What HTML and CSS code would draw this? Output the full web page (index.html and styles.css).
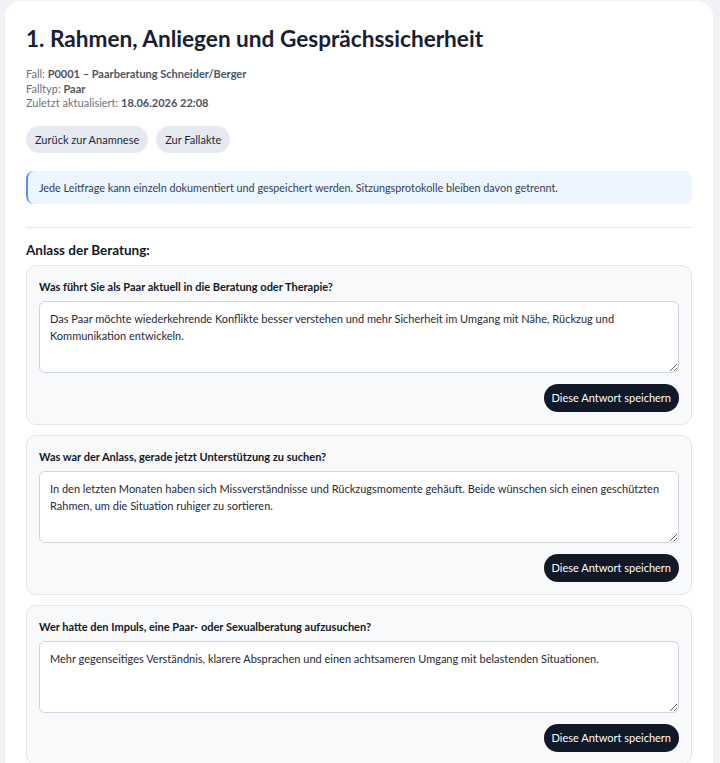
FILE: index.html
```html
<!DOCTYPE html>
<html lang="de">
<head>
  <meta charset="UTF-8">
  <meta name="viewport" content="width=device-width, initial-scale=1">
  <title>Rahmen, Anliegen und Gesprächssicherheit</title>
  <link rel="stylesheet" href="styles.css">
</head>
<body>

<div class="page">
  <h1 class="title">1. Rahmen, Anliegen und Gesprächssicherheit</h1>

  <div class="meta">
    <div>Fall: <strong>P0001 – Paarberatung Schneider/Berger</strong></div>
    <div>Falltyp: <strong>Paar</strong></div>
    <div>Zuletzt aktualisiert: <strong>18.06.2026 22:08</strong></div>
  </div>

  <div class="nav-buttons">
    <button class="pill">Zurück zur Anamnese</button>
    <button class="pill">Zur Fallakte</button>
  </div>

  <div class="info-box">
    Jede Leitfrage kann einzeln dokumentiert und gespeichert werden. Sitzungsprotokolle bleiben davon getrennt.
  </div>

  <hr class="divider">

  <h2 class="section-title">Anlass der Beratung:</h2>

  <div class="question">
    <label class="question-label">Was führt Sie als Paar aktuell in die Beratung oder Therapie?</label>
    <textarea class="answer">Das Paar möchte wiederkehrende Konflikte besser verstehen und mehr Sicherheit im Umgang mit Nähe, Rückzug und Kommunikation entwickeln.</textarea>
    <div class="question-actions">
      <button class="save-btn">Diese Antwort speichern</button>
    </div>
  </div>

  <div class="question">
    <label class="question-label">Was war der Anlass, gerade jetzt Unterstützung zu suchen?</label>
    <textarea class="answer">In den letzten Monaten haben sich Missverständnisse und Rückzugsmomente gehäuft. Beide wünschen sich einen geschützten Rahmen, um die Situation ruhiger zu sortieren.</textarea>
    <div class="question-actions">
      <button class="save-btn">Diese Antwort speichern</button>
    </div>
  </div>

  <div class="question">
    <label class="question-label">Wer hatte den Impuls, eine Paar- oder Sexualberatung aufzusuchen?</label>
    <textarea class="answer">Mehr gegenseitiges Verständnis, klarere Absprachen und einen achtsameren Umgang mit belastenden Situationen.</textarea>
    <div class="question-actions">
      <button class="save-btn">Diese Antwort speichern</button>
    </div>
  </div>
</div>

</body>
</html>
```

FILE: styles.css
```css
body {
  font-family: 'Lato', sans-serif;
  margin: 0;
  padding: 1px 7px 0 5px;
  background: #f1f2f5;
  color: #1f2937;
}
.page {
  background: white;
  border-radius: 16px;
  padding: 20px 21px 12px 21px;
}
.title {
  font-size: 22.6px;
  font-weight: bold;
  color: #172033;
  margin: 4px 0 14px 0;
  line-height: 28px;
}
.meta {
  font-size: 11px;
  line-height: 14.5px;
  color: #6b7280;
}
.meta strong {
  color: #4b5563;
}
.nav-buttons {
  display: flex;
  gap: 8px;
  margin-top: 15px;
}
.pill {
  font-family: inherit;
  font-size: 11px;
  color: #1f2937;
  background: #e6eaf0;
  border: none;
  border-radius: 14px;
  height: 27px;
  padding: 0 9px;
}
.info-box {
  margin-top: 18px;
  background: #edf5ff;
  border-left: 2px solid #5b8ff0;
  border-radius: 8px;
  padding: 0 11px;
  height: 33px;
  display: flex;
  align-items: center;
  font-size: 10.8px;
  color: #334155;
}
.divider {
  border: none;
  border-top: 1px solid #e5e7eb;
  margin: 23px 0 0 0;
}
.section-title {
  font-size: 13.5px;
  font-weight: bold;
  color: #111827;
  margin: 14px 0 7px 0;
}
.question {
  background: #f8f9fb;
  border: 1px solid #e2e6ec;
  border-radius: 10px;
  padding: 14px 12px 12px 12px;
  margin-bottom: 10px;
}
.question-label {
  display: block;
  font-size: 11px;
  font-weight: bold;
  color: #111827;
  line-height: 14px;
  margin-bottom: 7px;
}
.answer {
  display: block;
  box-sizing: border-box;
  width: 100%;
  height: 72px;
  font-family: inherit;
  font-size: 11px;
  line-height: 17px;
  color: #1f2937;
  background: white;
  border: 1px solid #cfd5de;
  border-radius: 6px;
  padding: 8px 10px;
}
.question-actions {
  display: flex;
  justify-content: flex-end;
  margin-top: 11px;
}
.save-btn {
  font-family: inherit;
  font-size: 11px;
  color: white;
  background: #111827;
  border: none;
  border-radius: 14px;
  height: 28px;
  padding: 0 8px;
}
```
